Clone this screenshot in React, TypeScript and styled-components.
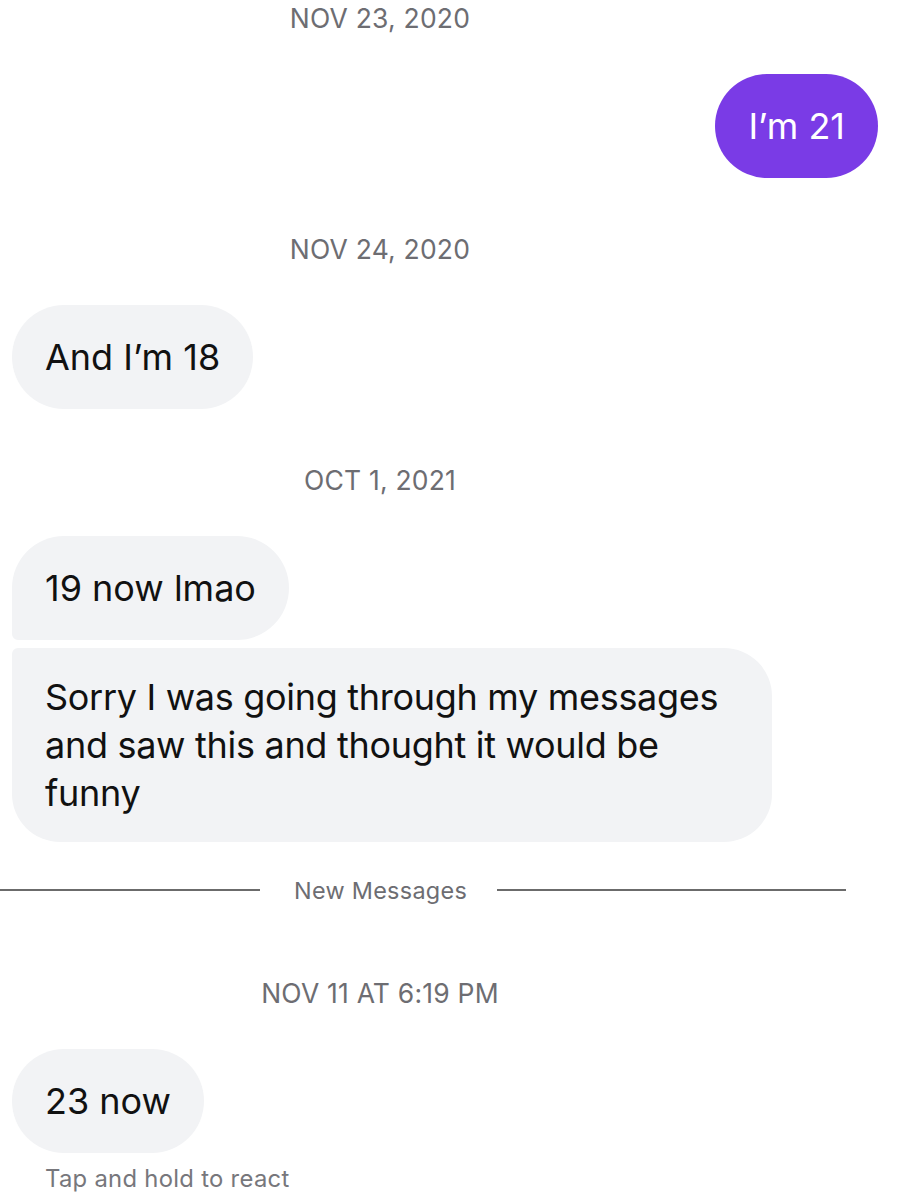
import styled, { createGlobalStyle, css } from "styled-components";

const GlobalStyle = createGlobalStyle`
  html, body {
    margin: 0;
    padding: 0;
    background: #ffffff;
  }
  body {
    font-family: Inter, "Noto Sans", "Liberation Sans", sans-serif;
    -webkit-font-smoothing: antialiased;
  }
`;

const Thread = styled.div`
  width: 900px;
  box-sizing: border-box;
  padding-top: 3px;
  display: flex;
  flex-direction: column;
`;

const DateRow = styled.div<{ $first?: boolean }>`
  width: 760px;
  text-align: center;
  font-size: 26.5px;
  line-height: 30px;
  color: #6d6d72;
  letter-spacing: 0.2px;
  margin-top: ${(p) => (p.$first ? 0 : 56)}px;
  margin-bottom: 41px;
`;

type Corner = "single" | "top" | "bottom";

const Bubble = styled.div<{ $mine?: boolean; $corner?: Corner }>`
  box-sizing: border-box;
  min-height: 104px;
  display: flex;
  align-items: center;
  padding: 25px 33px;
  font-size: 36px;
  line-height: 48px;
  border-radius: 52px;
  max-width: 760px;
  align-self: ${(p) => (p.$mine ? "flex-end" : "flex-start")};
  margin: ${(p) => (p.$mine ? "0 22px 0 0" : "0 0 0 12px")};
  background: ${(p) => (p.$mine ? "#7a3be6" : "#f2f3f5")};
  color: ${(p) => (p.$mine ? "#ffffff" : "#111111")};
  ${(p) =>
    p.$corner === "top" &&
    css`
      border-bottom-left-radius: 6px;
      margin-bottom: 8px;
    `}
  ${(p) =>
    p.$corner === "bottom" &&
    css`
      border-radius: 6px 48px 48px 48px;
      letter-spacing: -0.3px;
    `}
`;

const Divider = styled.div`
  display: flex;
  align-items: center;
  margin-top: 33px;
  height: 30px;
  margin-bottom: 17px;
`;

const Rule = styled.div<{ $width: number }>`
  width: ${(p) => p.$width}px;
  height: 2px;
  background: #6b6b6b;
`;

const DividerLabel = styled.div`
  font-size: 23.4px;
  color: #6d6d72;
  letter-spacing: 0.3px;
  padding: 0 30px 0 34px;
`;

const Hint = styled.div`
  margin: 13px 0 0 45px;
  font-size: 23.8px;
  line-height: 26px;
  color: #77777c;
  letter-spacing: 0.3px;
`;

export default function App() {
  return (
    <>
      <GlobalStyle />
      <Thread>
        <DateRow $first>NOV 23, 2020</DateRow>
        <Bubble $mine>I’m 21</Bubble>

        <DateRow>NOV 24, 2020</DateRow>
        <Bubble>And I’m 18</Bubble>

        <DateRow>OCT 1, 2021</DateRow>
        <Bubble $corner="top">19 now lmao</Bubble>
        <Bubble $corner="bottom">
          Sorry I was going through my messages and saw this and thought it
          would be funny
        </Bubble>

        <Divider>
          <Rule $width={260} />
          <DividerLabel>New Messages</DividerLabel>
          <Rule $width={349} />
        </Divider>

        <DateRow>NOV 11 AT 6:19 PM</DateRow>
        <Bubble>23 now</Bubble>
        <Hint>Tap and hold to react</Hint>
      </Thread>
    </>
  );
}
